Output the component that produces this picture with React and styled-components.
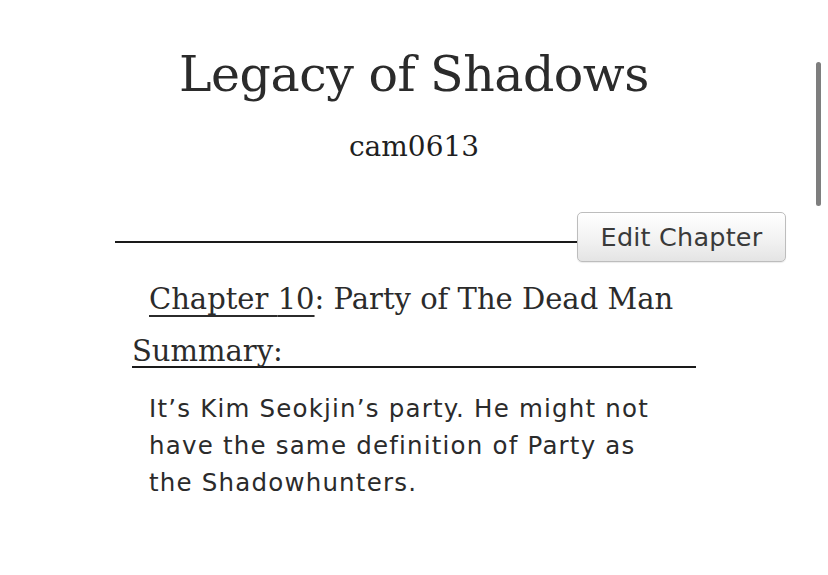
import styled, { createGlobalStyle } from "styled-components";

const GlobalStyle = createGlobalStyle`
	html, body {
		margin: 0;
		padding: 0;
		background: #ffffff;
	}
	body {
		color: #2b2b2b;
		font-family: "DejaVu Serif", Georgia, serif;
		overflow: hidden;
	}
`;

const chapter = {
	story: "Legacy of Shadows",
	author: "cam0613",
	number: 10,
	title: "Party of The Dead Man",
	summary:
		"It\u2019s Kim Seokjin\u2019s party. He might not have the same definition of Party as the Shadowhunters.",
};

const App = () => {
	return (
		<Page>
			<GlobalStyle />
			<Header>
				<Title>{chapter.story}</Title>
				<Author>{chapter.author}</Author>
			</Header>
			<Toolbar>
				<Rule />
				<EditButton type="button">Edit Chapter</EditButton>
			</Toolbar>
			<ChapterHeading>
				<ChapterLink href="#">Chapter {chapter.number}</ChapterLink>: {chapter.title}
			</ChapterHeading>
			<SummaryLabel>Summary:</SummaryLabel>
			<SummaryText>{chapter.summary}</SummaryText>
			<ScrollThumb />
		</Page>
	);
};

const Page = styled.div`
	position: relative;
	width: 828px;
	height: 575px;
	padding-top: 42px;
	box-sizing: border-box;
`;

const Header = styled.header`
	display: flex;
	flex-direction: column;
	align-items: center;
`;

const Title = styled.h1`
	margin: 0;
	font-family: "DejaVu Serif", Georgia, serif;
	font-weight: normal;
	font-size: 49px;
	line-height: 66px;
	color: #2b2b2b;
	letter-spacing: -0.5px;
`;

const Author = styled.div`
	margin-top: 19px;
	font-size: 28px;
	line-height: 40px;
	color: #1f1f1f;
	font-variant-numeric: oldstyle-nums;
`;

const Toolbar = styled.div`
	display: flex;
	align-items: center;
	margin: 45px 0 0 115px;
	width: 671px;
`;

const Rule = styled.div`
	flex: 1;
	height: 2px;
	margin-top: 9px;
	background: #1a1a1a;
`;

const EditButton = styled.button`
	width: 209px;
	height: 50px;
	padding: 0;
	border: 1px solid #bdbdbd;
	border-radius: 5px;
	background: linear-gradient(#ffffff, #f1f1f1 60%, #e4e4e4);
	box-shadow: 0 1px 1px rgba(0, 0, 0, 0.08);
	font-family: "DejaVu Sans", Verdana, sans-serif;
	font-size: 25.5px;
	letter-spacing: 0.2px;
	color: #3a3a3a;
	cursor: pointer;
`;

const ChapterHeading = styled.h2`
	margin: 15px 0 0 149px;
	font-weight: normal;
	font-size: 29px;
	line-height: 44px;
	color: #2b2b2b;
`;

const ChapterLink = styled.a`
	color: inherit;
	text-decoration: underline;
	text-decoration-thickness: 2px;
	text-underline-offset: 6px;
`;

const SummaryLabel = styled.div`
	margin: 15px 0 0 132px;
	width: 564px;
	font-size: 29px;
	line-height: 30px;
	border-bottom: 2px solid #1a1a1a;
	color: #2b2b2b;
`;

const SummaryText = styled.p`
	margin: 22px 0 0 149px;
	width: 515px;
	font-family: "DejaVu Sans", Verdana, sans-serif;
	font-size: 24.5px;
	letter-spacing: 1.2px;
	line-height: 37px;
	color: #2b2b2b;
`;

const ScrollThumb = styled.div`
	position: absolute;
	top: 62px;
	right: 7px;
	width: 5px;
	height: 144px;
	border-radius: 3px;
	background: #7e7e7e;
`;

export default App;
